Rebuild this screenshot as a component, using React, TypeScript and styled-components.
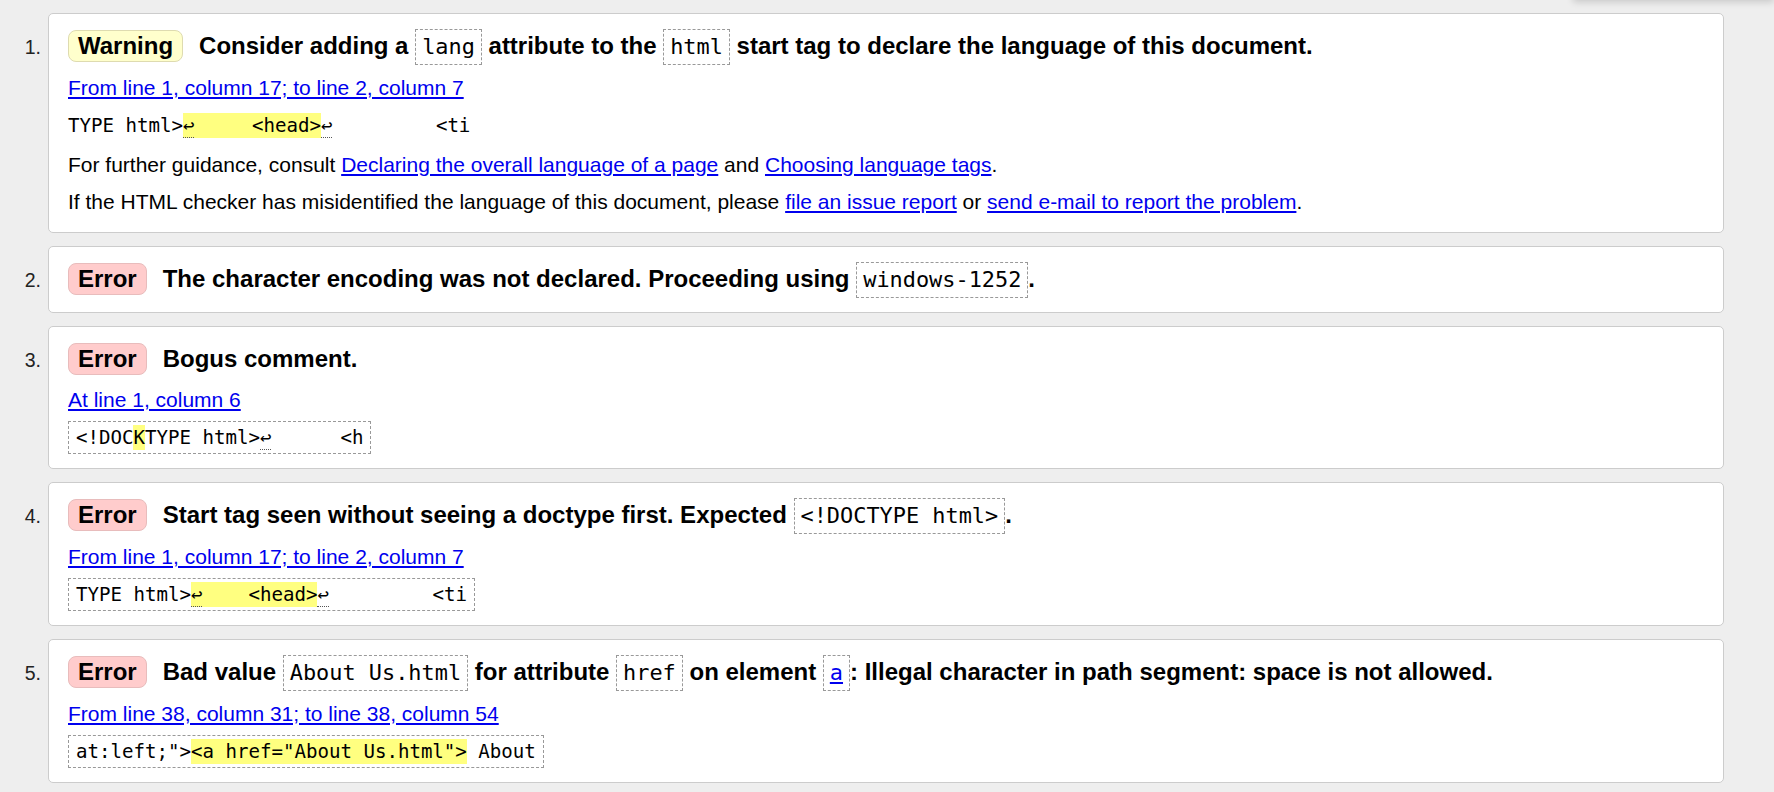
import React from 'react';
import styled, { createGlobalStyle } from 'styled-components';

const GlobalStyle = createGlobalStyle`
  html, body {
    margin: 0;
    padding: 0;
    background: #eeeeee;
  }
  body {
    font-family: "Liberation Sans", Arial, sans-serif;
    font-size: 21px;
    color: #000;
  }
`;

const Page = styled.div`
  position: relative;
  min-height: 792px;
  box-sizing: border-box;
  padding: 13px 50px 0 0;
  overflow: hidden;
`;

// bottom edge of a floating panel that sits above the viewport
const TopShadow = styled.div`
  position: absolute;
  top: -30px;
  left: 1573px;
  right: 0;
  height: 30px;
  background: #e2e2e2;
  box-shadow: 0 2px 7px rgba(0, 0, 0, 0.16);
`;

const List = styled.ol`
  list-style: none;
  margin: 0;
  padding: 0;
  display: flex;
  flex-direction: column;
  gap: 13px;
`;

const Item = styled.li`
  display: grid;
  grid-template-columns: 48px minmax(0, 1fr);
  align-items: baseline;
`;

const Marker = styled.span`
  font-size: 19.5px;
  text-align: right;
  padding-right: 7px;
  color: #222;
`;

const Card = styled.div`
  background: #fff;
  border: 1px solid #cccccc;
  border-radius: 5px;
  padding: 14px 19px 14px;
`;

const Heading = styled.p`
  margin: 0;
  font-size: 24px;
  font-weight: bold;
  line-height: 36px;
`;

const Badge = styled.span<{ $kind: 'warning' | 'error' }>`
  display: inline-block;
  margin-right: 16px;
  padding: 1px 9px;
  line-height: 28px;
  border-radius: 8px;
  border: 1px solid ${({ $kind }) => ($kind === 'warning' ? '#dedbb0' : '#e8bcbc')};
  background: ${({ $kind }) => ($kind === 'warning' ? '#ffffcc' : '#ffcccc')};
`;

const Code = styled.code`
  display: inline-block;
  padding: 3px 6px;
  line-height: 28px;
  border: 1px dashed #999;
  font-family: "DejaVu Sans Mono", "Liberation Mono", monospace;
  font-size: 21.9px;
  font-weight: normal;
  background: #fff;

  a {
    color: #0000ee;
  }
`;

const Location = styled.p`
  margin: 11px 0 0;
  line-height: 24px;
`;

const Link = styled.a`
  color: #0000ee;
  text-decoration: underline;
`;

const Extract = styled.p<{ $boxed?: boolean }>`
  width: fit-content;
  margin: 9px 0 0;
  white-space: pre;
  font-family: "DejaVu Sans Mono", "Liberation Mono", monospace;
  font-size: 19.1px;
  line-height: 24px;
  padding: ${({ $boxed }) => ($boxed ? '4px 7px 3px' : '5px 0')};
  border: ${({ $boxed }) => ($boxed ? '1px dashed #999' : 'none')};
`;

const Mark = styled.mark`
  background: #ffff80;
  color: inherit;
  padding: 1px 0;
`;

const Lf = styled.span`
  border-bottom: 1px dotted #555;
`;

const Para = styled.p<{ $gap: number }>`
  margin: ${({ $gap }) => $gap}px 0 0;
  line-height: 26px;

  &:last-child {
    margin-bottom: 3px;
  }
`;

export default function App() {
  return (
    <>
      <GlobalStyle />
      <Page>
        <TopShadow />
        <List>
          <Item>
            <Marker>1.</Marker>
            <Card>
              <Heading>
                <Badge $kind="warning">Warning</Badge>Consider adding a <Code>lang</Code> attribute to the{' '}
                <Code>html</Code> start tag to declare the language of this document.
              </Heading>
              <Location>
                <Link href="#">From line 1, column 17; to line 2, column 7</Link>
              </Location>
              <Extract>
                {'TYPE html>'}
                <Mark>
                  <Lf>↩</Lf>
                  {'     <head>'}
                </Mark>
                <Lf>↩</Lf>
                {'         <ti'}
              </Extract>
              <Para $gap={9}>
                For further guidance, consult <Link href="#">Declaring the overall language of a page</Link> and{' '}
                <Link href="#">Choosing language tags</Link>.
              </Para>
              <Para $gap={11}>
                If the HTML checker has misidentified the language of this document, please{' '}
                <Link href="#">file an issue report</Link> or <Link href="#">send e-mail to report the problem</Link>.
              </Para>
            </Card>
          </Item>

          <Item>
            <Marker>2.</Marker>
            <Card>
              <Heading>
                <Badge $kind="error">Error</Badge>The character encoding was not declared. Proceeding using{' '}
                <Code>windows-1252</Code>.
              </Heading>
            </Card>
          </Item>

          <Item>
            <Marker>3.</Marker>
            <Card>
              <Heading>
                <Badge $kind="error">Error</Badge>Bogus comment.
              </Heading>
              <Location>
                <Link href="#">At line 1, column 6</Link>
              </Location>
              <Extract $boxed>
                {'<!DOC'}
                <Mark>K</Mark>
                {'TYPE html>'}
                <Lf>↩</Lf>
                {'      <h'}
              </Extract>
            </Card>
          </Item>

          <Item>
            <Marker>4.</Marker>
            <Card>
              <Heading>
                <Badge $kind="error">Error</Badge>Start tag seen without seeing a doctype first. Expected{' '}
                <Code>{'<!DOCTYPE html>'}</Code>.
              </Heading>
              <Location>
                <Link href="#">From line 1, column 17; to line 2, column 7</Link>
              </Location>
              <Extract $boxed>
                {'TYPE html>'}
                <Mark>
                  <Lf>↩</Lf>
                  {'    <head>'}
                </Mark>
                <Lf>↩</Lf>
                {'         <ti'}
              </Extract>
            </Card>
          </Item>

          <Item>
            <Marker>5.</Marker>
            <Card>
              <Heading>
                <Badge $kind="error">Error</Badge>Bad value <Code>About Us.html</Code> for attribute{' '}
                <Code>href</Code> on element{' '}
                <Code>
                  <a href="#">a</a>
                </Code>
                : Illegal character in path segment: space is not allowed.
              </Heading>
              <Location>
                <Link href="#">From line 38, column 31; to line 38, column 54</Link>
              </Location>
              <Extract $boxed>
                {'at:left;">'}
                <Mark>{'<a href="About Us.html">'}</Mark>
                {' About'}
              </Extract>
            </Card>
          </Item>
        </List>
      </Page>
    </>
  );
}
